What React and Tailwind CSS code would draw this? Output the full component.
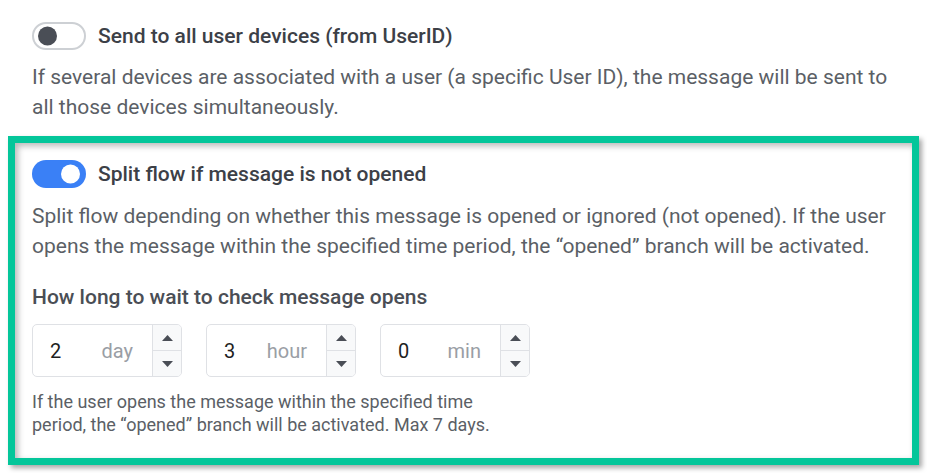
import React, { useState } from "react";

const FONT = { fontFamily: "Roboto, 'Noto Sans', Arial, sans-serif" };

const Toggle = ({ on, onClick }) => (
  <button
    type="button"
    onClick={onClick}
    className={`relative shrink-0 w-[54px] h-[28px] rounded-full transition-colors ${
      on ? "bg-[#3a80f6]" : "bg-white border-2 border-[#cdd0d4]"
    }`}
  >
    <span
      className={`absolute top-1/2 -translate-y-1/2 w-[19px] h-[19px] rounded-full ${
        on ? "right-[6px] bg-white" : "left-[4px] bg-[#4a4e56]"
      }`}
    />
  </button>
);

const Stepper = ({ value, unit }) => (
  <div className="flex w-[150px] h-[53px] rounded-[5px] border border-[#dfe1e5] bg-white overflow-hidden">
    <div className="flex-1 flex items-center pl-[17px] pr-[19px]">
      <span className="text-[20px] text-[#1f1f1f]">{value}</span>
      <span className="ml-auto text-[20px] text-[#9a9ea5]">{unit}</span>
    </div>
    <div className="w-[29px] flex flex-col border-l border-[#dfe1e5] bg-[#f8f9fa]">
      <div className="flex-1 flex items-center justify-center border-b border-[#dfe1e5]">
        <svg width="11" height="6" viewBox="0 0 11 6">
          <path d="M0 6 L5.5 0 L11 6 Z" fill="#4a4e56" />
        </svg>
      </div>
      <div className="flex-1 flex items-center justify-center">
        <svg width="11" height="6" viewBox="0 0 11 6">
          <path d="M0 0 L5.5 6 L11 0 Z" fill="#4a4e56" />
        </svg>
      </div>
    </div>
  </div>
);

export default function App() {
  const [all, setAll] = useState(false);
  const [split, setSplit] = useState(true);

  return (
    <div className="w-[927px] h-[473px] bg-white overflow-hidden" style={FONT}>
      {/* Send to all devices */}
      <div className="px-[32px] pt-[22px]">
        <div className="flex items-center gap-[12px]">
          <Toggle on={all} onClick={() => setAll(!all)} />
          <span className="text-[21px] leading-[28px] font-medium text-[#3c4047]">
            Send to all user devices (from UserID)
          </span>
        </div>
        <p className="mt-[12px] text-[21px] leading-[30px] text-[#5b5f66]">
          If several devices are associated with a user (a specific User ID), the message will be sent to
          <br />
          all those devices simultaneously.
        </p>
      </div>

      {/* Split flow - highlighted */}
      <div className="mx-[8px] mt-[14px] border-[7px] border-[#04c69a] shadow-[3px_3px_5px_rgba(0,0,0,0.35),inset_3px_3px_6px_rgba(0,0,0,0.28)] px-[17px] pt-[17px] pb-[22px]">
        <div className="flex items-center gap-[12px]">
          <Toggle on={split} onClick={() => setSplit(!split)} />
          <span className="text-[21px] leading-[28px] font-medium text-[#3c4047]">
            Split flow if message is not opened
          </span>
        </div>
        <p className="mt-[13px] text-[21px] leading-[30px] text-[#5b5f66]">
          Split flow depending on whether this message is opened or ignored (not opened). If the user
          <br />
          opens the message within the specified time period, the “opened” branch will be activated.
        </p>
        <div className="mt-[22px] text-[21px] leading-[28px] font-medium text-[#4a4e55]">
          How long to wait to check message opens
        </div>
        <div className="mt-[13px] flex gap-[24px]">
          <Stepper value="2" unit="day" />
          <Stepper value="3" unit="hour" />
          <Stepper value="0" unit="min" />
        </div>
        <p className="mt-[13px] text-[18px] leading-[23px] text-[#5b5f66]">
          If the user opens the message within the specified time
          <br />
          period, the “opened” branch will be activated. Max 7 days.
        </p>
      </div>
    </div>
  );
}
